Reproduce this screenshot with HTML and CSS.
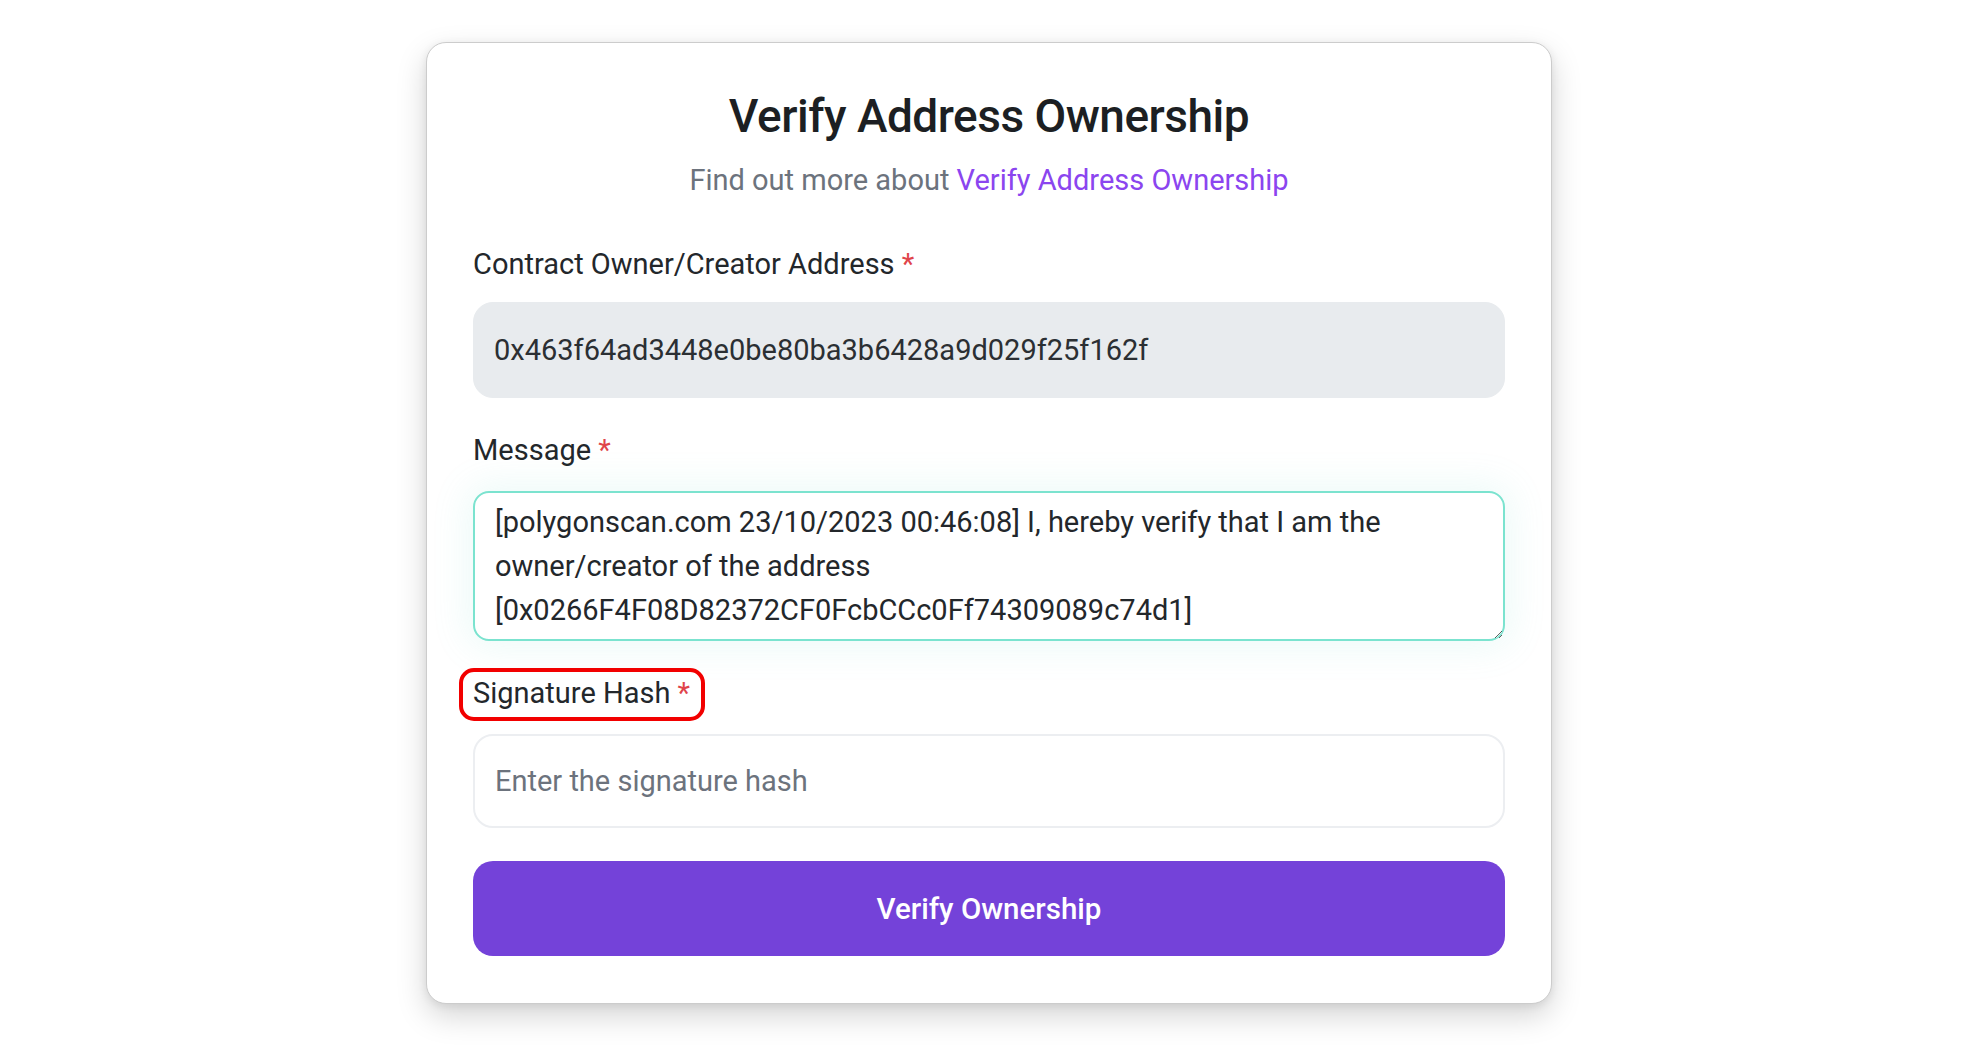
FILE: index.html
```html
<!DOCTYPE html>
<html lang="en">
<head>
<meta charset="utf-8">
<title>Verify Address Ownership</title>
<link rel="stylesheet" href="styles.css">
</head>
<body>
<main class="page">
  <section class="card">
    <header class="card-header">
      <h1 class="title">Verify Address Ownership</h1>
      <p class="subtitle">Find out more about <a class="link" href="#">Verify Address Ownership</a></p>
    </header>
    <form class="form">
      <div class="field">
        <label class="label label--first">Contract Owner/Creator Address <span class="req">*</span></label>
        <input class="control control--readonly" type="text" readonly value="0x463f64ad3448e0be80ba3b6428a9d029f25f162f">
      </div>
      <div class="field">
        <label class="label">Message <span class="req">*</span></label>
        <textarea class="control control--textarea">[polygonscan.com 23/10/2023 00:46:08] I, hereby verify that I am the
owner/creator of the address
[0x0266F4F08D82372CF0FcbCCc0Ff74309089c74d1]</textarea>
      </div>
      <div class="field field--last">
        <label class="label"><span class="highlight">Signature Hash <span class="req">*</span></span></label>
        <input class="control control--plain" type="text" placeholder="Enter the signature hash">
      </div>
      <button class="button" type="button">Verify Ownership</button>
    </form>
  </section>
</main>
</body>
</html>
```

FILE: styles.css
```css
* {
  box-sizing: border-box;
}

html, body {
  margin: 0;
  padding: 0;
  background: #ffffff;
}

body {
  font-family: Roboto, "Liberation Sans", Arial, sans-serif;
  color: #212529;
}

.page {
  padding-top: 42px;
  min-height: 1046px;
}

.card {
  width: 1126px;
  height: 962px;
  margin: 0 auto;
  background: #ffffff;
  border: 1px solid #cccccc;
  border-radius: 20px;
  box-shadow: 0 12px 30px rgba(0, 0, 0, 0.17), 0 2px 8px rgba(0, 0, 0, 0.08);
  padding: 45px 46px 46px 46px;
}

.card-header {
  text-align: center;
}

.title {
  margin: 0;
  font-size: 46px;
  line-height: 56px;
  font-weight: 500;
  letter-spacing: -0.5px;
  color: #1c1f23;
}

.subtitle {
  margin: 19px 0 0 0;
  font-size: 29px;
  line-height: 34px;
  color: #6c737d;
}

.link {
  color: #8b45ef;
  text-decoration: none;
}

.form {
  margin-top: 50px;
  display: flex;
  flex-direction: column;
}

.field {
  display: flex;
  flex-direction: column;
  margin-bottom: 35px;
}

.field--last {
  margin-bottom: 33px;
}

.label {
  font-size: 29px;
  line-height: 34px;
  color: #23272b;
  margin-bottom: 24px;
}

.label--first {
  margin-bottom: 21px;
}

.req {
  color: #e0444a;
}

.highlight {
  position: relative;
  display: inline-block;
}

.highlight::before {
  content: "";
  position: absolute;
  top: -8px;
  left: -14px;
  right: -15px;
  bottom: -11px;
  border: 4px solid #f20000;
  border-radius: 15px;
}

.control {
  width: 100%;
  font-family: Roboto, "Liberation Sans", Arial, sans-serif;
  font-size: 29px;
  color: #23272b;
  border-radius: 20px;
  outline: none;
}

.control--readonly {
  height: 96px;
  padding: 0 20px;
  background: #e8ebee;
  border: 1px solid #e8ebee;
  color: #2b2f33;
}

.control--textarea {
  height: 150px;
  padding: 7px 20px;
  line-height: 44px;
  border: 2px solid #7be3cf;
  border-radius: 16px;
  background: #ffffff;
  box-shadow: 0 0 36px 6px rgba(110, 220, 200, 0.13);
  resize: vertical;
}

.control--plain {
  height: 94px;
  padding: 0 20px;
  border: 2px solid #eceef1;
  background: #ffffff;
}

.control--plain::placeholder {
  color: #6c737d;
  opacity: 1;
}

.button {
  height: 95px;
  width: 100%;
  border: none;
  border-radius: 20px;
  background: #7442d9;
  color: #ffffff;
  font-family: Roboto, "Liberation Sans", Arial, sans-serif;
  font-size: 29.5px;
  font-weight: 500;
  cursor: pointer;
}
```
